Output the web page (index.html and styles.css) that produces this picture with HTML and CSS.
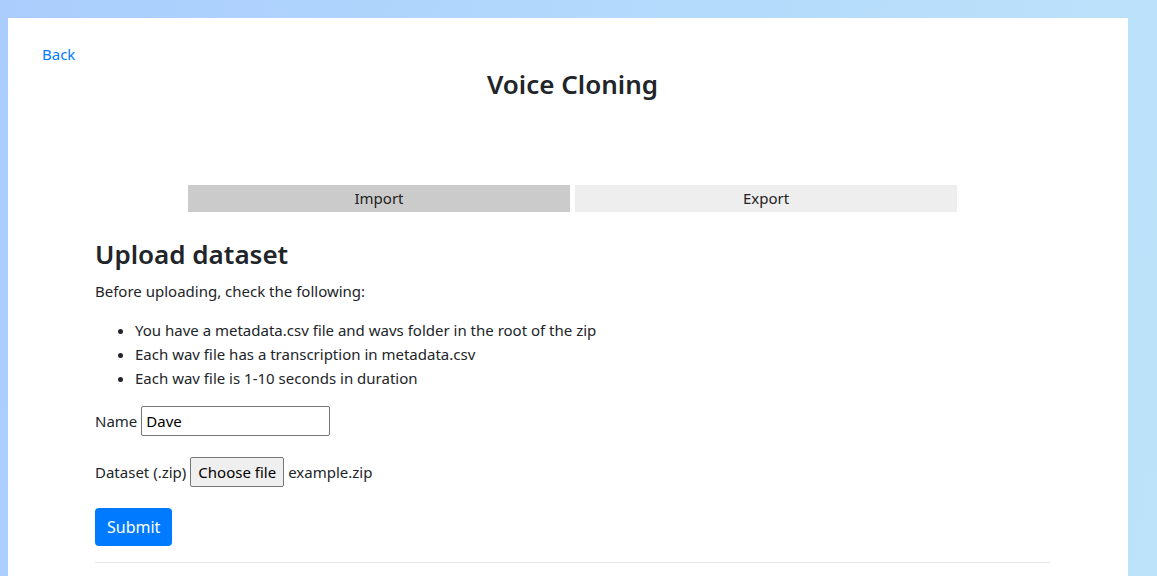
FILE: index.html
```html
<!DOCTYPE html>
<html lang="en">
<head>
<meta charset="utf-8">
<title>Voice Cloning</title>
<link rel="stylesheet" href="styles.css">
</head>
<body>
<div class="card">
  <div class="back-row"><a class="back" href="#">Back</a></div>
  <main class="container">
    <h1 class="title">Voice Cloning</h1>
    <div class="tabs">
      <div class="tab tab-active">Import</div>
      <div class="tab">Export</div>
    </div>
    <h2 class="section-title">Upload dataset</h2>
    <p class="intro">Before uploading, check the following:</p>
    <ul class="checklist">
      <li>You have a metadata.csv file and wavs folder in the root of the zip</li>
      <li>Each wav file has a transcription in metadata.csv</li>
      <li>Each wav file is 1-10 seconds in duration</li>
    </ul>
    <form class="upload-form">
      <div class="form-row">
        <label class="label" for="name">Name</label>
        <input class="text-input" id="name" type="text" value="Dave">
      </div>
      <div class="form-row">
        <span class="label">Dataset (.zip)</span>
        <span class="file-button">Choose file</span>
        <span class="file-name">example.zip</span>
      </div>
      <div class="form-row">
        <button class="submit" type="button">Submit</button>
      </div>
    </form>
    <hr class="divider">
  </main>
</div>
</body>
</html>
```

FILE: styles.css
```css
html, body {
  margin: 0;
  padding: 0;
  height: 100%;
}
body {
  background: linear-gradient(100deg, #aacdfd 0%, #b3d9fc 50%, #bde3fa 100%);
  font-family: "Noto Sans", "Open Sans", sans-serif;
  font-size: 15px;
  line-height: 24px;
  color: #212529;
  padding: 18px 29px 0 8px;
  box-sizing: border-box;
  overflow: hidden;
}
.card {
  background: #ffffff;
  height: 100%;
  width: 1120px;
  overflow: hidden;
}
.back-row {
  padding: 24px 0 0 34px;
  height: 24px;
}
.back {
  color: #007bff;
  text-decoration: none;
}
.container {
  width: 955px;
  margin-left: 87px;
}
.title {
  margin: 1px 0 0;
  text-align: center;
  font-size: 26px;
  line-height: 34px;
  font-weight: 600;
}
.tabs {
  width: 769px;
  margin: 84px auto 0;
  display: flex;
  gap: 5px;
}
.tab {
  flex: 1;
  height: 27px;
  line-height: 27px;
  text-align: center;
  background: #eeeeee;
  color: #222;
}
.tab-active {
  background: #cbcbcb;
}
.section-title {
  margin: 25px 0 8px;
  font-size: 26px;
  line-height: 34px;
  font-weight: 600;
}
.intro {
  margin: 0 0 15px;
}
.checklist {
  margin: 0 0 16px;
  padding-left: 40px;
}
.upload-form {
  display: flex;
  flex-direction: column;
  gap: 21px;
}
.form-row {
  display: flex;
  align-items: center;
  gap: 4px;
}
.text-input {
  width: 189px;
  height: 30px;
  box-sizing: border-box;
  border: 1px solid #767676;
  border-radius: 2px;
  padding: 1px 4px;
  font: inherit;
  color: #000;
}
.file-button {
  height: 30px;
  box-sizing: border-box;
  border: 1px solid #767676;
  border-radius: 2px;
  background: #efefef;
  padding: 0 7px;
  line-height: 28px;
  color: #000;
}
.submit {
  background: #007bff;
  color: #fff;
  border: none;
  border-radius: 4px;
  height: 38px;
  padding: 0 12px;
  font: inherit;
  font-size: 16px;
}
.divider {
  margin: 16px 0 0;
  border: 0;
  border-top: 1px solid #e5e5e5;
}
```
